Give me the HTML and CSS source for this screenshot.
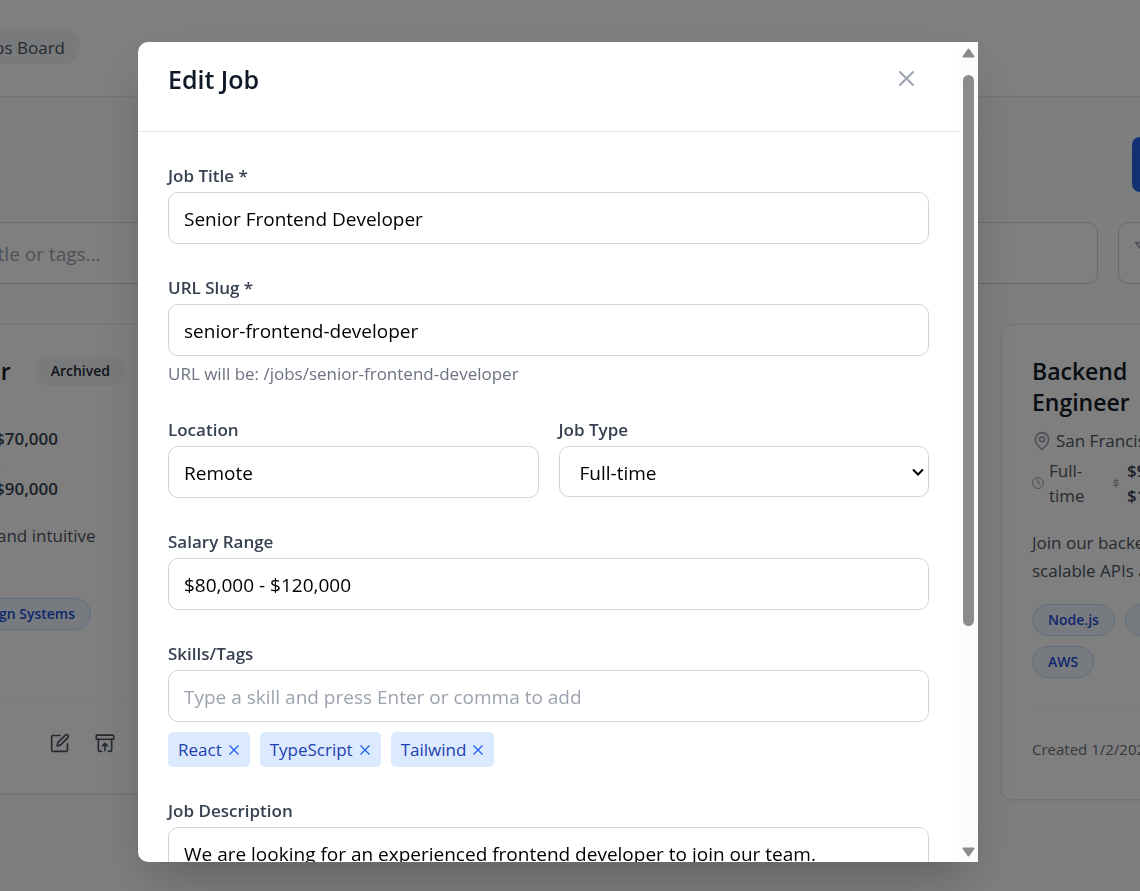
FILE: index.html
```html
<!DOCTYPE html>
<html lang="en">
<head>
<meta charset="utf-8">
<meta name="viewport" content="width=device-width, initial-scale=1">
<title>Edit Job</title>
<link rel="stylesheet" href="styles.css">
</head>
<body>
<div class="page" inert>
  <header class="topbar"><a class="nav-link" href="#jobs">Jobs Board</a></header>
  <main class="board">
    <div class="actions"><button class="create" type="button" aria-label="Create job"></button></div>
    <div class="filters">
      <input class="search" type="search" aria-label="Search jobs" placeholder="title or tags...">
      <button class="filter" type="button" aria-label="Filter">
        <svg width="20" height="20" viewBox="0 0 24 24" class="icon"><path d="M22 3H2l8 9.460V19l4 2v-8.540z"/></svg>
      </button>
    </div>
    <div class="cards">
      <article class="card card-start">
        <div class="card-head"><h2 class="card-title">r</h2><span class="status">Archived</span></div>
        <p class="pay pay-start">$70,000<br>-<br>$90,000</p>
        <p class="summary summary-start">and intuitive</p>
        <div class="tags tags-start"><span class="tag">Design Systems</span></div>
        <footer class="card-foot foot-start">
          <button class="icon-button" type="button" aria-label="Edit">
            <svg width="20" height="20" viewBox="0 0 24 24" class="icon"><path d="M12 3H3.500A1.500 1.500 0 0 0 2 4.500V20.500A1.500 1.500 0 0 0 3.500 22H19.500A1.500 1.500 0 0 0 21 20.500V13"/><path d="M18.400 2.600a2.120 2.120 0 0 1 3 3L12.500 14.500l-4 1 1-4z"/></svg>
          </button>
          <button class="icon-button" type="button" aria-label="Restore">
            <svg width="20" height="20" viewBox="0 0 24 24" class="icon"><rect x="1.500" y="2.500" width="21" height="5" rx="1"/><path d="M4 7.500V20a2 2 0 0 0 2 2h2M20 7.500V20a2 2 0 0 1-2 2h-2M12 21v-8M9 15.500l3-3 3 3"/></svg>
          </button>
        </footer>
      </article>
      <article class="card card-end">
        <h2 class="card-title">Backend<br>Engineer</h2>
        <p class="place">
          <svg width="20" height="20" viewBox="0 0 24 24" class="icon"><path d="M20 10c0 5-5.500 10.200-7.400 11.800a1 1 0 0 1-1.200 0C9.500 20.200 4 15 4 10a8 8 0 0 1 16 0z"/><circle cx="12" cy="10" r="3"/></svg>
          San Francisco
        </p>
        <div class="facts">
          <svg width="12" height="12" viewBox="0 0 24 24" class="icon"><circle cx="12" cy="12" r="11"/><path d="M12 5v7l4 2"/></svg>
          <span class="kind">Full-<br>time</span>
          <svg width="12" height="12" viewBox="0 0 24 24" class="icon"><path d="M12 3v18M17 7H10a2.500 2.500 0 0 0 0 5h4a2.500 2.500 0 0 1 0 5H7"/></svg>
          <span class="pay">$90,000 -<br>$130,000</span>
        </div>
        <p class="summary">Join our backend<br>scalable APIs and</p>
        <div class="tags"><span class="tag">Node.js</span><span class="tag">Python</span></div>
        <div class="tags"><span class="tag">AWS</span></div>
        <footer class="card-foot foot-end">Created 1/2/2024</footer>
      </article>
    </div>
  </main>
</div>

<div class="overlay">
  <section class="modal" role="dialog" aria-modal="true" aria-labelledby="modal-title">
    <div class="modal-body">
      <header class="modal-head">
        <h1 class="modal-title" id="modal-title">Edit Job</h1>
        <button class="close" type="button" aria-label="Close">
          <svg width="25" height="25" viewBox="0 0 25 25" class="icon"><path d="M6 6l13 13M19 6L6 19"/></svg>
        </button>
      </header>
      <form class="form">
        <div class="field">
          <label class="label" for="title">Job Title *</label>
          <input class="control" id="title" type="text" value="Senior Frontend Developer">
        </div>
        <div class="field">
          <label class="label" for="slug">URL Slug *</label>
          <input class="control" id="slug" type="text" value="senior-frontend-developer">
          <p class="hint">URL will be: /jobs/senior-frontend-developer</p>
        </div>
        <div class="pair">
          <div class="field">
            <label class="label" for="location">Location</label>
            <input class="control" id="location" type="text" value="Remote">
          </div>
          <div class="field">
            <label class="label" for="type">Job Type</label>
            <div class="select-wrap">
              <select class="control select" id="type"><option>Full-time</option></select>
              <svg class="chevron" width="12" height="8" viewBox="0 0 12 8"><path d="M1 1.500l5 5 5-5"/></svg>
            </div>
          </div>
        </div>
        <div class="field">
          <label class="label" for="salary">Salary Range</label>
          <input class="control" id="salary" type="text" value="$80,000 - $120,000">
        </div>
        <div class="field">
          <label class="label" for="skills">Skills/Tags</label>
          <input class="control" id="skills" type="text" placeholder="Type a skill and press Enter or comma to add">
          <div class="chips">
            <span class="chip">React<button class="remove" type="button" aria-label="Remove React"><svg width="12" height="12" viewBox="0 0 12 12"><path d="M1.500 1.500l9 9M10.500 1.500l-9 9"/></svg></button></span>
            <span class="chip">TypeScript<button class="remove" type="button" aria-label="Remove TypeScript"><svg width="12" height="12" viewBox="0 0 12 12"><path d="M1.500 1.500l9 9M10.500 1.500l-9 9"/></svg></button></span>
            <span class="chip">Tailwind<button class="remove" type="button" aria-label="Remove Tailwind"><svg width="12" height="12" viewBox="0 0 12 12"><path d="M1.500 1.500l9 9M10.500 1.500l-9 9"/></svg></button></span>
          </div>
        </div>
        <div class="field">
          <label class="label" for="description">Job Description</label>
          <textarea class="control area" id="description" rows="4">We are looking for an experienced frontend developer to join our team.</textarea>
        </div>
      </form>
    </div>
    <div class="scrollbar" aria-hidden="true">
      <svg width="13" height="10" viewBox="0 0 13 10"><path d="M6.500 1.500L11.500 8.500H1.500z"/></svg>
      <div class="track"><div class="thumb"></div></div>
      <svg width="13" height="10" viewBox="0 0 13 10"><path d="M6.500 8.500L11.500 1.500H1.500z"/></svg>
    </div>
  </section>
</div>
</body>
</html>
```

FILE: styles.css
```css
* { box-sizing: border-box; }

body {
  margin: 0;
  height: 100vh;
  overflow: hidden;
  font-family: "Open Sans", "Noto Sans", sans-serif;
  font-size: 17px;
  line-height: 25px;
  color: #4b5563;
}

h1, h2, p { margin: 0; }
button, input, select, textarea { font-family: inherit; margin: 0; }
button { padding: 0; border: 0; background: none; color: inherit; }

.icon { display: block; flex: none; fill: none; stroke: currentColor; stroke-width: 2; stroke-linecap: round; stroke-linejoin: round; }

/* Jobs board */
.page { height: 100%; overflow: hidden; background: #f8fefb; }
.topbar { display: flex; height: 97px; padding: 29px 0 32px; background: #fff; border-bottom: 1px solid #e5e7eb; box-shadow: 0 1px 2px rgba(0, 0, 0, .05); }
.nav-link { display: flex; justify-content: flex-end; align-items: center; width: 80px; height: 35px; padding: 1px 15px 0 0; border-radius: 0 18px 18px 0; background: #f3f4f6; color: #4b5563; text-decoration: none; white-space: nowrap; }
.board { padding-top: 40px; }
.actions { display: flex; justify-content: flex-end; }
.create { width: 8px; height: 55px; border-radius: 10px 0 0 10px; background: #2563eb; }
.filters { display: flex; gap: 20px; margin-top: 30px; }
.search { flex: 1; min-width: 0; height: 62px; padding: 2px 15px 0 0; margin-left: -15px; border: 1px solid #d1d5db; border-radius: 10px; background: #fff; font-size: 19px; }
.search::placeholder { color: #9ca3af; opacity: 1; }
.filter { width: 22px; height: 62px; padding-left: 15px; padding-bottom: 6px; overflow: hidden; border: 1px solid #d1d5db; border-right: 0; border-radius: 10px 0 0 10px; background: #fff; color: #9ca3af; }

.cards { display: flex; justify-content: space-between; align-items: flex-start; margin-top: 40px; }
.card { padding: 30px; border: 1px solid #e5e7eb; border-radius: 10px; background: #fff; box-shadow: 0 1px 2px rgba(0, 0, 0, .05); }
.card-start { width: 192px; margin-left: -36px; padding-bottom: 35px; }
.card-end { width: 378px; margin-right: -239px; }
.card-title { padding-top: 1px; font-size: 23px; line-height: 31px; font-weight: 600; color: #111827; }
.card-head { display: flex; justify-content: flex-end; align-items: center; gap: 25px; height: 31px; }
.status { padding: 0 15px; border-radius: 15px; background: #f3f4f6; color: #1f2937; font-size: 14px; line-height: 30px; font-weight: 600; }
.pay { color: #374151; font-weight: 600; }
.pay-start { margin-top: 40px; }
.summary { margin-top: 21px; line-height: 28px; }
.summary-start { padding-left: 2px; }
.tags { display: flex; gap: 10px; margin-top: 10px; }
.summary + .tags { margin-top: 19px; }
.tags-start { justify-content: flex-end; padding-right: 34px; }
.summary + .tags-start { margin-top: 48px; }
.tag { flex: none; padding: 0 15px; border: 1px solid #bfdbfe; border-radius: 16px; background: #eff6ff; color: #1d4ed8; font-size: 14px; line-height: 30px; font-weight: 600; }
.card-foot { border-top: 1px solid #f3f4f6; }
.foot-start { display: flex; justify-content: flex-end; gap: 25px; margin-top: 72px; padding: 30px 10px 5px 0; }
.foot-end { margin-top: 30px; padding-top: 28px; padding-bottom: 7px; font-size: 15px; color: #6b7280; }
.place { display: flex; align-items: center; gap: 4px; margin-top: 10px; }
.place .icon, .facts .icon { color: #9ca3af; }
.facts { display: flex; align-items: center; gap: 5px; margin-top: 5px; }
.kind { width: 56px; }

/* Dialog */
.overlay { position: fixed; inset: 0; display: flex; justify-content: center; padding: 42px 162px 29px 138px; background: rgba(0, 0, 0, .5); }
.modal { display: flex; flex: 1; min-width: 0; overflow: hidden; border-radius: 10px 0 0 10px; background: #fff; box-shadow: 0 25px 50px -12px rgba(0, 0, 0, .25); }
.modal-body { flex: 1; min-width: 0; overflow: hidden; }
.modal-head { display: flex; justify-content: space-between; align-items: center; padding: 14px 30px 30px; border-bottom: 1px solid #e5e7eb; }
.modal-title { padding-top: 2px; font-size: 25px; line-height: 35px; font-weight: 600; color: #111827; }
.close { padding: 10px; color: #9ca3af; }
.form { display: flex; flex-direction: column; gap: 30px; padding: 30px; }
.field { display: flex; flex-direction: column; min-width: 0; }
.pair { display: grid; grid-template-columns: 1fr 1fr; gap: 20px; }
.label { margin-bottom: 3px; line-height: 27px; font-weight: 600; color: #374151; }
.control { width: 100%; height: 52px; padding: 2px 15px 0; border: 1px solid #d1d5db; border-radius: 10px; background: #fff; color: #000; font-size: 19px; line-height: 30px; }
.control::placeholder { color: #9ca3af; opacity: 1; }
.select-wrap { display: grid; align-items: center; }
.select { grid-area: 1 / 1; height: 51px; padding-left: 20px; appearance: none; }
.chevron { grid-area: 1 / 1; justify-self: end; margin-right: 5px; fill: none; stroke: #000; stroke-width: 2; pointer-events: none; }
.area { height: 130px; padding: 11px 15px; resize: none; }
.hint { margin-top: 5px; line-height: 25px; color: #6b7280; }
.chips { display: flex; flex-wrap: wrap; gap: 10px; margin-top: 10px; }
.chip { display: flex; align-items: center; gap: 6px; padding: 5px 10px; border-radius: 5px; background: #dbeafe; color: #1e40af; }
.remove svg { display: block; fill: none; stroke: #2563eb; stroke-width: 1.3; }

.scrollbar { display: flex; flex-direction: column; align-items: center; width: 19px; padding: 6px 0 5px; background: #fcfcfc; }
.scrollbar svg { flex: none; fill: #8b8b8b; stroke: #8b8b8b; stroke-width: 2; stroke-linejoin: round; }
.track { flex: 1; padding: 17px 0; }
.thumb { width: 11px; height: 73%; border-radius: 6px; background: #8b8b8b; }
```
